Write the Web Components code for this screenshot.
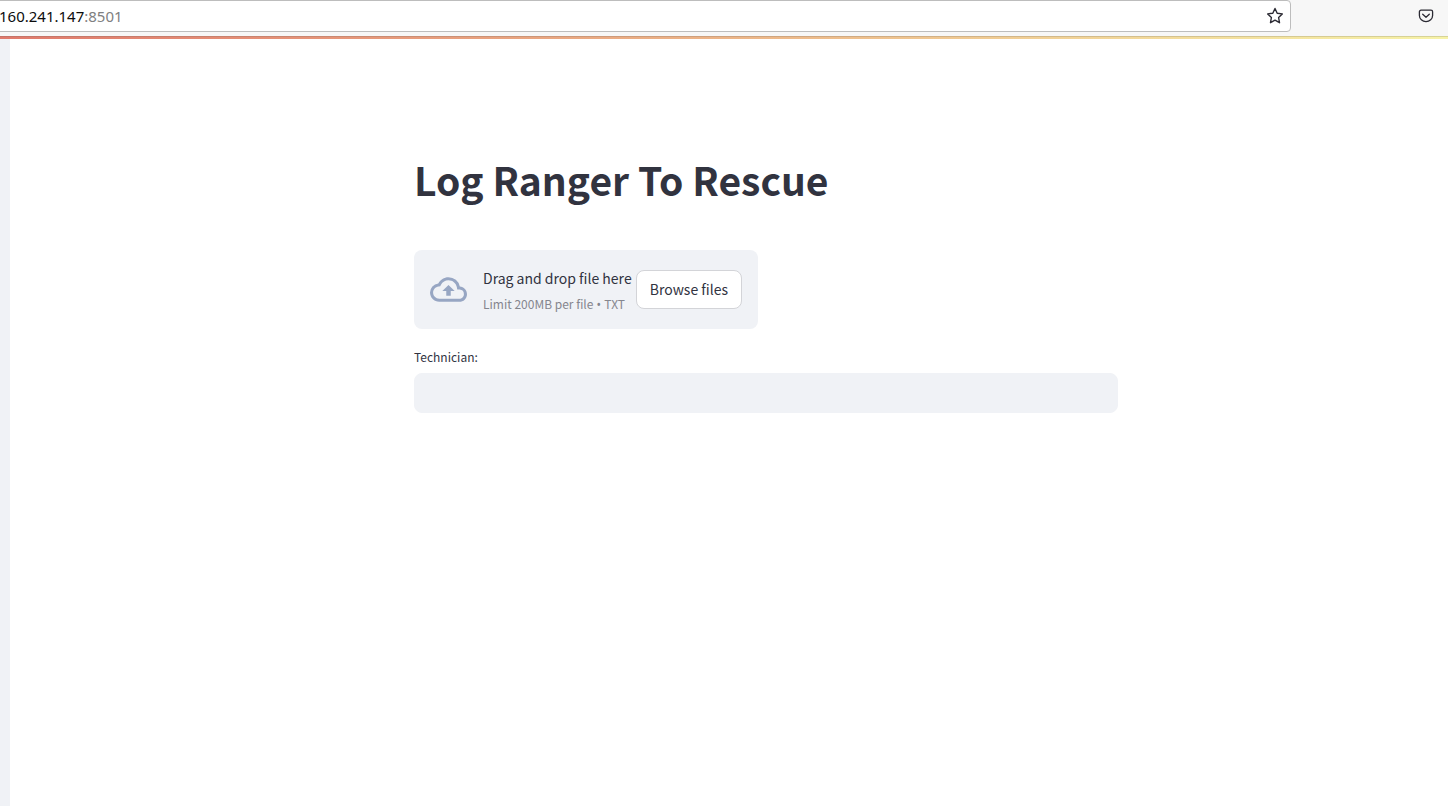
<!DOCTYPE html>
<html lang="en">
<head>
  <meta charset="utf-8">
  <title>Log Ranger</title>
  <style>
    body {
      margin: 0;
      background: #ffffff;
      color: #31333f;
      font-family: "Noto Sans CJK SC", "Noto Sans", sans-serif;
    }
  </style>
</head>
<body>

<log-ranger-app>
  <browser-bar slot="toolbar" host="160.241.147" port=":8501"></browser-bar>
  <page-title>Log Ranger To Rescue</page-title>
  <column-row>
    <file-uploader label="Drag and drop file here" limit="Limit 200MB per file" types="TXT"></file-uploader>
  </column-row>
  <text-field label="Technician:"></text-field>
</log-ranger-app>

<script>

  /**
   * APP SHELL = TOOLBAR, COLLAPSED SIDEBAR AND MAIN BLOCK
   */
  class LogRangerApp extends HTMLElement {

    constructor() {
      super();

      const shadowRoot = this.attachShadow({mode: 'open'});
      shadowRoot.innerHTML = `
        <style>
          :host {
            display: flex;
            flex-direction: column;
            min-height: 100vh;
          }
          .decoration {
            height: 3px;
            background: linear-gradient(90deg, #e07a6c, #ecb487 50%, #f7f3a8);
            box-shadow: inset 0 1px rgba(90, 90, 90, 0.2);
          }
          .body {
            display: flex;
            flex: 1;
          }
          aside {
            width: 10px;
            background: #f0f2f6;
          }
          main {
            flex: 1;
            padding: 108px 0 40px 74px;
          }
          .block {
            display: flex;
            flex-direction: column;
            gap: 16px;
            max-width: 704px;
            margin: 0 auto;
          }
        </style>
        <slot name="toolbar"></slot>
        <div class="decoration"></div>
        <div class="body">
          <aside></aside>
          <main>
            <div class="block"><slot></slot></div>
          </main>
        </div>
      `;
    }

  }

  customElements.define("log-ranger-app", LogRangerApp);

  /**
   * BROWSER BAR = ADDRESS, BOOKMARK AND POCKET
   */
  class BrowserBar extends HTMLElement {

    constructor() {
      super();

      const shadowRoot = this.attachShadow({mode: 'open'});
      shadowRoot.innerHTML = `
        <style>
          :host {
            display: flex;
            justify-content: space-between;
            height: 36px;
            background: #f7f7f7;
            font-family: "Noto Sans", sans-serif;
            overflow: hidden;
          }
          .address {
            display: flex;
            align-items: center;
            justify-content: space-between;
            box-sizing: border-box;
            flex: 1;
            height: 32px;
            margin-left: -4px;
            padding: 0 6px 0 2px;
            border: 1px solid #bdbdbd;
            border-radius: 4px;
            background: #ffffff;
            font-size: 15px;
            line-height: 20px;
          }
          .host { color: #0c0c0d; }
          .port { color: #808080; }
          .tools {
            display: flex;
            align-items: center;
            justify-content: flex-end;
            box-sizing: border-box;
            width: 157px;
            height: 32px;
            padding-right: 13px;
          }
          button {
            display: flex;
            padding: 0;
            border: 0;
            background: none;
            color: #2b2a33;
          }
        </style>
        <div class="address">
          <div><span class="host"></span><span class="port"></span></div>
          <button class="bookmark-action" aria-label="Bookmark this page">
            <svg width="18" height="18" viewBox="0 0 18 18" fill="none" stroke="currentColor" stroke-width="1.4" stroke-linejoin="round">
              <path d="M9 1.5 11.2 6.2 16.3 6.9 12.6 10.5 13.5 15.7 9 13.2 4.5 15.7 5.4 10.5 1.7 6.9 6.8 6.2Z"/>
            </svg>
          </button>
        </div>
        <div class="tools">
          <button class="pocket-action" aria-label="Save to Pocket">
            <svg width="18" height="18" viewBox="0 0 18 18" fill="none" stroke="currentColor" stroke-width="1.3" stroke-linecap="round" stroke-linejoin="round">
              <path d="M4 3.2H14A1.6 1.6 0 0 1 15.6 4.8V8.4A6.6 6.2 0 0 1 2.4 8.4V4.8A1.6 1.6 0 0 1 4 3.2Z"/>
              <path d="M5.7 7.2 9 10.2 12.3 7.2"/>
            </svg>
          </button>
        </div>
      `;
    }

    connectedCallback() {
      this.shadowRoot.querySelector('.host').textContent = this.getAttribute('host');
      this.shadowRoot.querySelector('.port').textContent = this.getAttribute('port');
    }

  }

  customElements.define("browser-bar", BrowserBar);

  /**
   * PAGE TITLE
   */
  class PageTitle extends HTMLElement {

    constructor() {
      super();

      const shadowRoot = this.attachShadow({mode: 'open'});
      shadowRoot.innerHTML = `
        <style>
          :host { display: block; }
          h1 {
            margin: 0;
            padding: 6px 0 28px;
            font-size: 39px;
            font-weight: 700;
            line-height: 53px;
          }
        </style>
        <h1><slot></slot></h1>
      `;
    }

  }

  customElements.define("page-title", PageTitle);

  /**
   * COLUMN ROW = TWO EQUAL COLUMNS
   */
  class ColumnRow extends HTMLElement {

    constructor() {
      super();

      const shadowRoot = this.attachShadow({mode: 'open'});
      shadowRoot.innerHTML = `
        <style>
          :host {
            display: grid;
            grid-template-columns: 1fr 1fr;
            gap: 16px;
          }
        </style>
        <slot></slot>
      `;
    }

  }

  customElements.define("column-row", ColumnRow);

  /**
   * FILE UPLOADER
   */
  class FileUploader extends HTMLElement {

    constructor() {
      super();

      const shadowRoot = this.attachShadow({mode: 'open'});
      shadowRoot.innerHTML = `
        <style>
          :host { display: block; }
          section {
            display: flex;
            align-items: center;
            padding: 16px;
            border-radius: 8px;
            background: #f0f2f6;
          }
          svg {
            flex: none;
            margin-right: 16px;
            color: #97a6c3;
          }
          .instructions {
            display: flex;
            flex-direction: column;
            flex: 1;
            gap: 5px;
            white-space: nowrap;
          }
          .label {
            font-size: 14px;
            line-height: 24px;
          }
          .limit {
            color: #85868e;
            font-size: 12px;
            line-height: 18px;
          }
          .bullet {
            font-family: "Noto Sans", sans-serif;
            line-height: 1;
          }
          button {
            flex: none;
            height: 39px;
            padding: 0 13px 2px;
            border: 1px solid #d3d4d8;
            border-radius: 8px;
            background: #ffffff;
            color: inherit;
            font: inherit;
            font-size: 14px;
          }
        </style>
        <section>
          <svg width="37" height="37" viewBox="0 0 24 24" fill="currentColor" aria-hidden="true">
            <path d="M19.35 10.04A7.49 7.49 0 0 0 12 4C9.11 4 6.6 5.64 5.35 8.04A5.994 5.994 0 0 0 0 14c0 3.31 2.69 6 6 6h13c2.76 0 5-2.24 5-5 0-2.64-2.05-4.78-4.65-4.96zM19 18H6c-2.21 0-4-1.79-4-4 0-2.05 1.53-3.76 3.56-3.97l1.07-.11.5-.95A5.469 5.469 0 0 1 12 6c2.62 0 4.88 1.86 5.39 4.43l.3 1.5 1.53.11A2.98 2.98 0 0 1 22 15c0 1.65-1.35 3-3 3zM8 13h2.55v3h2.9v-3H16l-4-4z"/>
          </svg>
          <div class="instructions">
            <span class="label"></span>
            <span class="limit"><span class="size"></span><span class="bullet"> • </span><span class="types"></span></span>
          </div>
          <button type="button">Browse files</button>
          <input type="file" accept=".txt" hidden>
        </section>
      `;
    }

    connectedCallback() {
      this.shadowRoot.querySelector('.label').textContent = this.getAttribute('label');
      this.shadowRoot.querySelector('.size').textContent = this.getAttribute('limit');
      this.shadowRoot.querySelector('.types').textContent = this.getAttribute('types');

      // BROWSE //
      const fileInput = this.shadowRoot.querySelector('input');
      this.shadowRoot.querySelector('button').addEventListener('click', () => { fileInput.click(); });
    }

  }

  customElements.define("file-uploader", FileUploader);

  /**
   * TEXT FIELD
   */
  class TextField extends HTMLElement {

    constructor() {
      super();

      const shadowRoot = this.attachShadow({mode: 'open'});
      shadowRoot.innerHTML = `
        <style>
          :host {
            display: flex;
            flex-direction: column;
            gap: 4px;
          }
          label {
            font-size: 12px;
            line-height: 24px;
          }
          input {
            box-sizing: border-box;
            width: 100%;
            height: 40px;
            padding: 8px 12px;
            border: 1px solid #f0f2f6;
            border-radius: 8px;
            background: #f0f2f6;
            color: inherit;
            font: inherit;
            font-size: 14px;
          }
        </style>
        <label for="field"></label>
        <input id="field" type="text">
      `;
    }

    connectedCallback() {
      this.shadowRoot.querySelector('label').textContent = this.getAttribute('label');
    }

  }

  customElements.define("text-field", TextField);

</script>
</body>
</html>
